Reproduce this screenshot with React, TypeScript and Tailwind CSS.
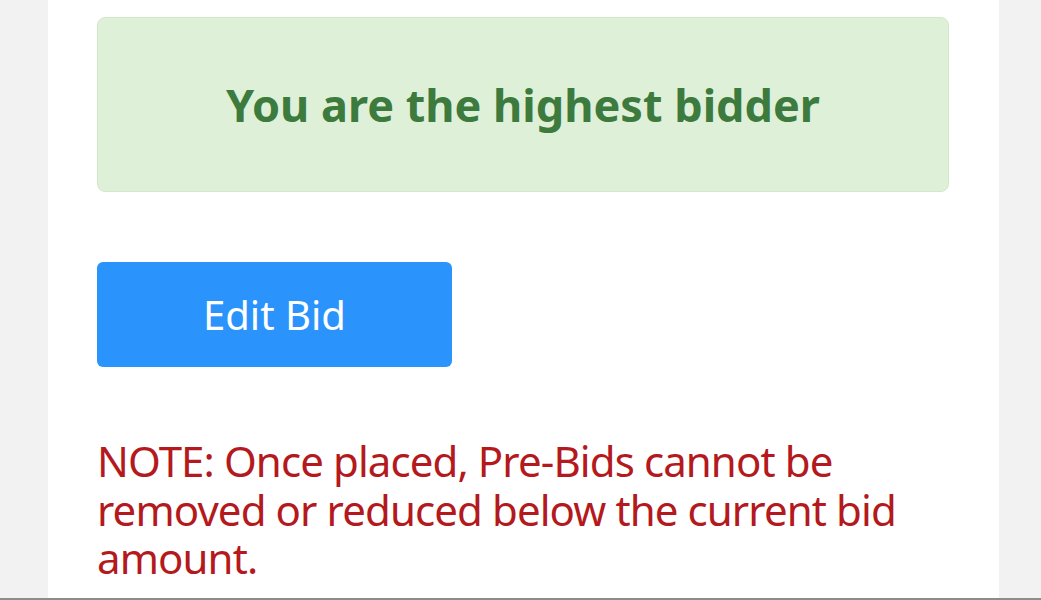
export default function App() {
  return (
    <div className="flex h-[600px] w-full overflow-hidden border-b-2 border-[#8c8c8c] bg-[#f2f2f2] font-['Noto_Sans',sans-serif]">
      <div className="ml-[48px] flex h-full w-[951px] flex-col bg-white pl-[49px] pr-[50px] pt-[17px]">
        <div className="flex h-[175px] items-center justify-center rounded-lg border border-[#d3e8cb] bg-[#dff0d8]">
          <h2 className="text-[45px] font-bold text-[#3c7a3e]">You are the highest bidder</h2>
        </div>

        <button
          type="button"
          className="mt-[70px] h-[105px] w-[355px] rounded-md bg-[#2a93fc] text-[40px] text-white"
        >
          Edit Bid
        </button>

        <p className="mt-[70px] text-[42px] leading-[48.5px] tracking-[-0.9px] text-[#b3191d]">
          NOTE: Once placed, Pre-Bids cannot be removed or reduced below the current bid amount.
        </p>
      </div>
    </div>
  )
}
